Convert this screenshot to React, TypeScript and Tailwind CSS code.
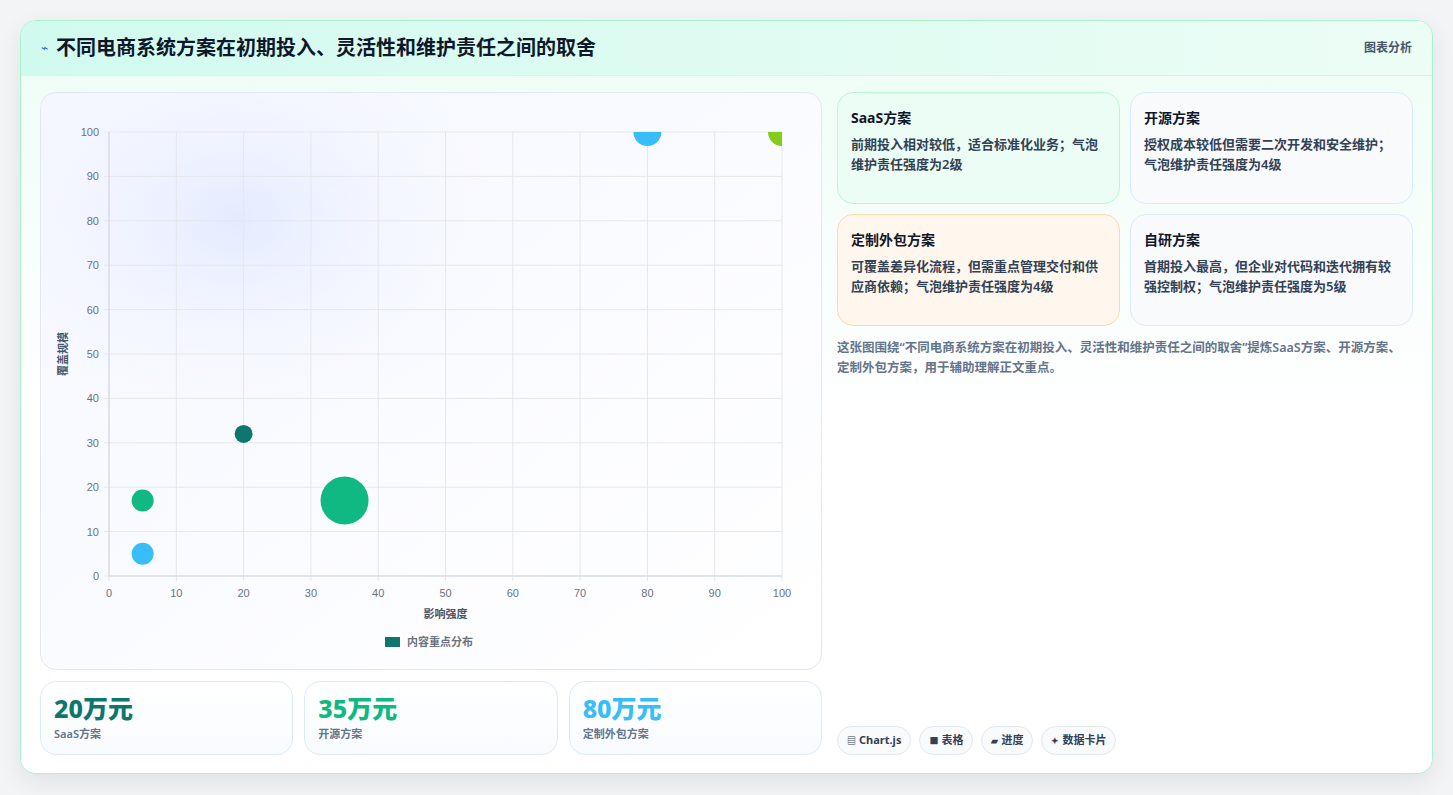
import React from "react";

const F = { fontFamily: '"Noto Sans", "Noto Sans CJK SC", sans-serif' };

function Chart() {
  const x0 = 68, x1 = 741, y0 = 483, y1 = 39;
  const sx = (v: number) => x0 + ((x1 - x0) * v) / 100;
  const sy = (v: number) => y0 - ((y0 - y1) * v) / 100;
  const ticks = [0, 10, 20, 30, 40, 50, 60, 70, 80, 90, 100];
  const bubbles = [
    { x: 5, y: 5, r: 11, c: "#38bdf8" },
    { x: 5, y: 17, r: 11, c: "#10b981" },
    { x: 20, y: 32, r: 9, c: "#0f766e" },
    { x: 35, y: 17, r: 24, c: "#10b981" },
    { x: 80, y: 100, r: 14, c: "#38bdf8" },
    { x: 100, y: 100, r: 14, c: "#84cc16" },
  ];
  return (
    <svg width="780" height="576" style={{ fontFamily: '"Liberation Sans", "Noto Sans CJK SC", sans-serif' }}>
      <defs>
        <clipPath id="pc">
          <rect x={x0} y={y1} width={x1 - x0} height={y0 - y1} />
        </clipPath>
        <radialGradient id="glow" cx="0.25" cy="0.22" r="0.45">
          <stop offset="0" stopColor="#e0e7ff" stopOpacity="0.8" />
          <stop offset="1" stopColor="#ffffff" stopOpacity="0" />
        </radialGradient>
      </defs>
      <rect x="0" y="0" width="780" height="576" fill="url(#glow)" />
      {ticks.map((t) => (
        <g key={t}>
          <line x1={sx(t)} x2={sx(t)} y1={y1} y2={y0 + 5} stroke="#e5e7eb" />
          <line x1={x0 - 5} x2={x1} y1={sy(t)} y2={sy(t)} stroke="#e5e7eb" />
          <text x={sx(t)} y={y0 + 21} fontSize="11" fill="#6b7280" textAnchor="middle">{t}</text>
          <text x={x0 - 10} y={sy(t) + 4} fontSize="11" fill="#6b7280" textAnchor="end">{t}</text>
        </g>
      ))}
      <line x1={x0} x2={x1} y1={y0} y2={y0} stroke="#d1d5db" />
      <line x1={x0} x2={x0} y1={y1} y2={y0} stroke="#d1d5db" />
      <g clipPath="url(#pc)">
        {bubbles.map((b, i) => (
          <circle key={i} cx={sx(b.x)} cy={sy(b.y)} r={b.r} fill={b.c} />
        ))}
      </g>
      <text x={(x0 + x1) / 2} y={525} fontSize="11" fontWeight="bold" fill="#475569" textAnchor="middle">影响强度</text>
      <text x={0} y={0} fontSize="11" fontWeight="bold" fill="#475569" textAnchor="middle" transform="translate(26 261) rotate(-90)">覆盖规模</text>
      <rect x="344" y="544" width="15" height="10" fill="#0f766e" />
      <text x="366" y="553" fontSize="11" fontWeight="bold" fill="#6b7280">内容重点分布</text>
    </svg>
  );
}

function Card({ title, body, cls }: { title: string; body: React.ReactNode; cls: string }) {
  return (
    <div className={`rounded-2xl border px-[13px] py-[14px] h-[112px] ${cls}`}>
      <div className="text-[14px] font-bold text-[#0f172a] leading-[22px]">{title}</div>
      <div className="mt-[5px] text-[13px] font-semibold text-[#334155] leading-[20px]">{body}</div>
    </div>
  );
}

function Stat({ v, c, l }: { v: string; c: string; l: string }) {
  return (
    <div className="flex-1 rounded-2xl border border-[#dbeafe] bg-gradient-to-b from-white to-[#f8fbff] px-[13px] pt-[10px] h-[74px]">
      <div className={`text-[25px] font-extrabold leading-[32px] ${c}`}>{v}</div>
      <div className="text-[11px] font-semibold text-[#64748b] mt-[2px]">{l}</div>
    </div>
  );
}

function Tag({ icon, t }: { icon: string; t: string }) {
  return (
    <div className="h-[29px] px-[9px] rounded-full border border-[#e2e8f0] bg-[#f8fafc] flex items-center gap-[3px] text-[11px] font-bold text-[#334155]">
      <span className="text-[9px]">{icon}</span>
      {t}
    </div>
  );
}

export default function App() {
  return (
    <div className="w-[1453px] h-[795px] bg-[#f3f4f6] pt-[20px] pl-[20px]" style={F}>
      <div className="w-[1413px] h-[754px] rounded-2xl border border-[#a7f3d0] bg-white overflow-hidden shadow-[0_8px_24px_rgba(0,0,0,0.08)] flex flex-col">
        <div className="h-[55px] shrink-0 bg-gradient-to-r from-[#d1faef] to-[#ecfdf5] border-b border-[#d1fae5] flex items-center justify-between pl-[20px] pr-[20px]">
          <div className="flex items-center gap-[8px]">
            <span className="text-[#2563eb] text-[12px]">⌁</span>
            <span className="text-[20px] font-bold text-[#0f172a]">不同电商系统方案在初期投入、灵活性和维护责任之间的取舍</span>
          </div>
          <span className="text-[12px] font-semibold text-[#475569]">图表分析</span>
        </div>
        <div className="flex-1 flex gap-[15px] px-[19px] pt-[16px] pb-[18px] bg-gradient-to-b from-[#f0fdf7] via-white to-white">
          <div className="w-[782px] flex flex-col gap-[11px]">
            <div className="h-[578px] rounded-2xl border border-[#e2e8f0] bg-gradient-to-br from-[#f5f7ff] to-white overflow-hidden">
              <Chart />
            </div>
            <div className="flex gap-[11px]">
              <Stat v="20万元" c="text-[#0f766e]" l="SaaS方案" />
              <Stat v="35万元" c="text-[#10b981]" l="开源方案" />
              <Stat v="80万元" c="text-[#38bdf8]" l="定制外包方案" />
            </div>
          </div>
          <div className="flex-1 flex flex-col">
            <div className="grid grid-cols-2 gap-x-[10px] gap-y-[10px]">
              <Card title="SaaS方案" cls="border-[#bbf7d0] bg-[#ecfdf5]" body="前期投入相对较低，适合标准化业务；气泡维护责任强度为2级" />
              <Card title="开源方案" cls="border-[#dbeafe] bg-[#f8fafc]" body="授权成本较低但需要二次开发和安全维护；气泡维护责任强度为4级" />
              <Card title="定制外包方案" cls="border-[#fcd9a8] bg-[#fff7ed]" body="可覆盖差异化流程，但需重点管理交付和供应商依赖；气泡维护责任强度为4级" />
              <Card title="自研方案" cls="border-[#dbeafe] bg-[#f8fafc]" body="首期投入最高，但企业对代码和迭代拥有较强控制权；气泡维护责任强度为5级" />
            </div>
            <p className="mt-[12px] text-[12.5px] font-semibold text-[#64748b] leading-[20px]">
              这张图围绕“不同电商系统方案在初期投入、灵活性和维护责任之间的取舍”提炼SaaS方案、开源方案、定制外包方案，用于辅助理解正文重点。
            </p>
            <div className="mt-auto flex gap-[8px]">
              <Tag icon="▤" t="Chart.js" />
              <Tag icon="■" t="表格" />
              <Tag icon="▰" t="进度" />
              <Tag icon="✦" t="数据卡片" />
            </div>
          </div>
        </div>
      </div>
    </div>
  );
}
